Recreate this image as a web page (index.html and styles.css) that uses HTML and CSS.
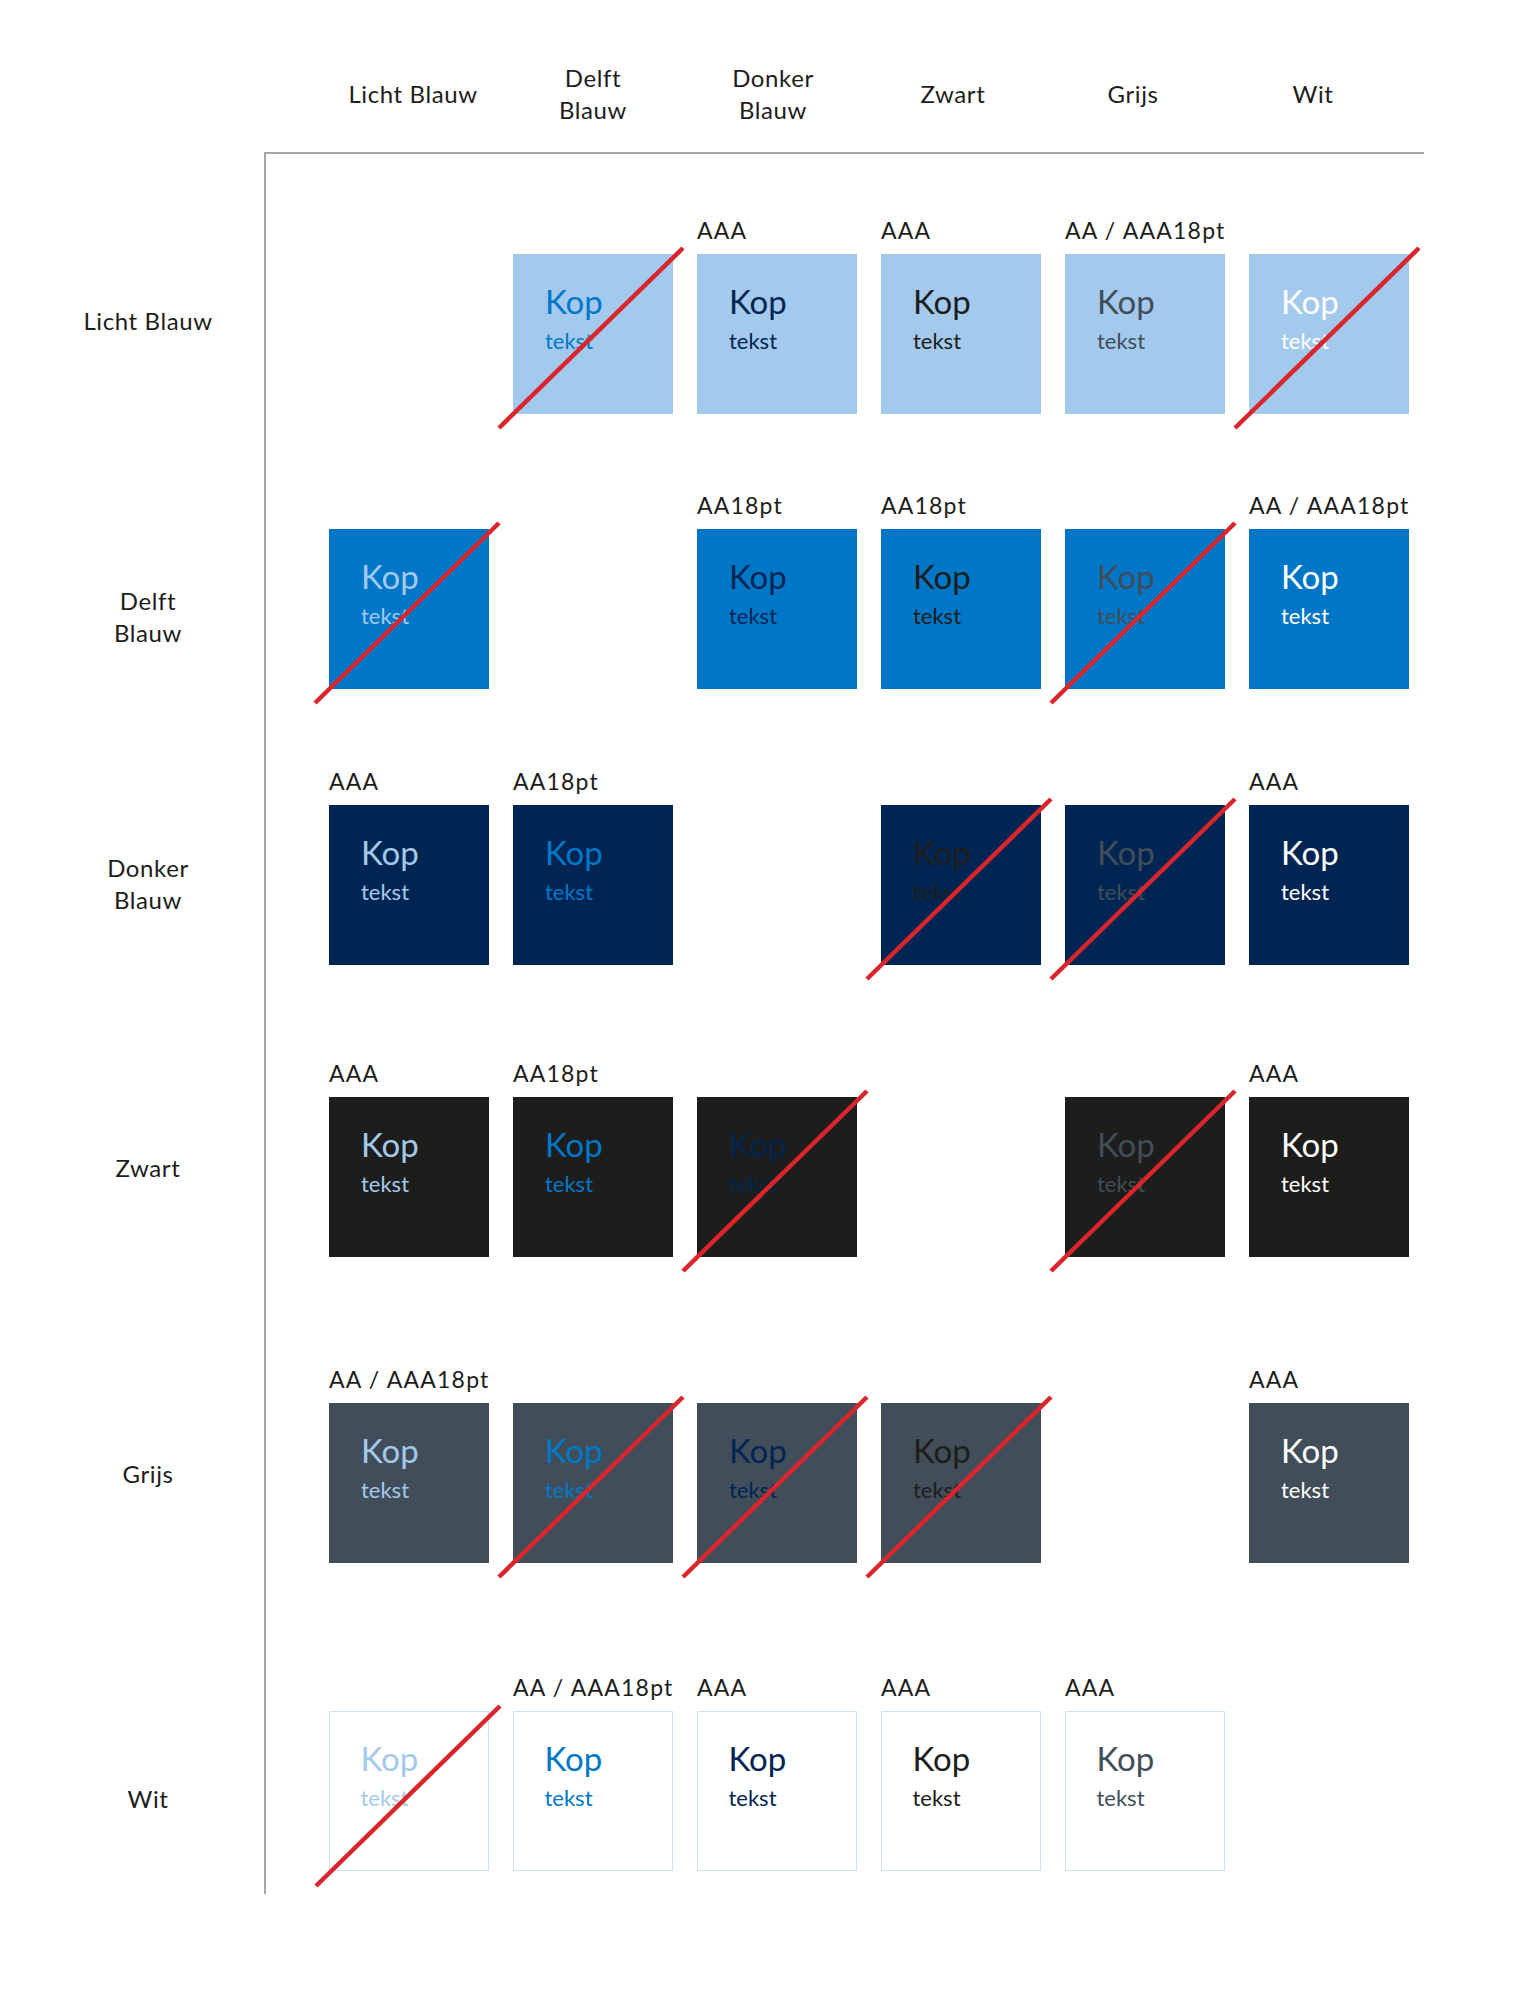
FILE: index.html
```html
<!DOCTYPE html>
<html lang="nl">
<head>
<meta charset="utf-8">
<title>Kleurcontrast</title>
<link rel="stylesheet" href="styles.css">
</head>
<body>
<div class="chart">
  <div class="head">
    <div class="hcell">Licht Blauw</div>
    <div class="hcell">Delft<br>Blauw</div>
    <div class="hcell">Donker<br>Blauw</div>
    <div class="hcell">Zwart</div>
    <div class="hcell">Grijs</div>
    <div class="hcell">Wit</div>
  </div>
  <div class="body">
    <div class="frame"></div>

    <div class="rlabel r1">Licht Blauw</div>
    <div class="cells r1">
      <div class="cell"></div>
      <div class="cell"><div class="lbl"></div><div class="box bg-lb t-db"><span class="kop">Kop</span><span class="tekst">tekst</span><svg class="x" viewBox="0 0 192 192"><line x1="2" y1="184" x2="186" y2="4"/></svg></div></div>
      <div class="cell"><div class="lbl">AAA</div><div class="box bg-lb t-dk"><span class="kop">Kop</span><span class="tekst">tekst</span></div></div>
      <div class="cell"><div class="lbl">AAA</div><div class="box bg-lb t-zw"><span class="kop">Kop</span><span class="tekst">tekst</span></div></div>
      <div class="cell"><div class="lbl">AA / AAA18pt</div><div class="box bg-lb t-gr"><span class="kop">Kop</span><span class="tekst">tekst</span></div></div>
      <div class="cell"><div class="lbl"></div><div class="box bg-lb t-wt"><span class="kop">Kop</span><span class="tekst">tekst</span><svg class="x" viewBox="0 0 192 192"><line x1="2" y1="184" x2="186" y2="4"/></svg></div></div>
    </div>

    <div class="rlabel r2">Delft<br>Blauw</div>
    <div class="cells r2">
      <div class="cell"><div class="lbl"></div><div class="box bg-db t-lb"><span class="kop">Kop</span><span class="tekst">tekst</span><svg class="x" viewBox="0 0 192 192"><line x1="2" y1="184" x2="186" y2="4"/></svg></div></div>
      <div class="cell"></div>
      <div class="cell"><div class="lbl">AA18pt</div><div class="box bg-db t-dk"><span class="kop">Kop</span><span class="tekst">tekst</span></div></div>
      <div class="cell"><div class="lbl">AA18pt</div><div class="box bg-db t-zw"><span class="kop">Kop</span><span class="tekst">tekst</span></div></div>
      <div class="cell"><div class="lbl"></div><div class="box bg-db t-gr"><span class="kop">Kop</span><span class="tekst">tekst</span><svg class="x" viewBox="0 0 192 192"><line x1="2" y1="184" x2="186" y2="4"/></svg></div></div>
      <div class="cell"><div class="lbl">AA / AAA18pt</div><div class="box bg-db t-wt"><span class="kop">Kop</span><span class="tekst">tekst</span></div></div>
    </div>

    <div class="rlabel r3">Donker<br>Blauw</div>
    <div class="cells r3">
      <div class="cell"><div class="lbl">AAA</div><div class="box bg-dk t-lb"><span class="kop">Kop</span><span class="tekst">tekst</span></div></div>
      <div class="cell"><div class="lbl">AA18pt</div><div class="box bg-dk t-db"><span class="kop">Kop</span><span class="tekst">tekst</span></div></div>
      <div class="cell"></div>
      <div class="cell"><div class="lbl"></div><div class="box bg-dk t-zw"><span class="kop">Kop</span><span class="tekst">tekst</span><svg class="x" viewBox="0 0 192 192"><line x1="2" y1="184" x2="186" y2="4"/></svg></div></div>
      <div class="cell"><div class="lbl"></div><div class="box bg-dk t-gr"><span class="kop">Kop</span><span class="tekst">tekst</span><svg class="x" viewBox="0 0 192 192"><line x1="2" y1="184" x2="186" y2="4"/></svg></div></div>
      <div class="cell"><div class="lbl">AAA</div><div class="box bg-dk t-wt"><span class="kop">Kop</span><span class="tekst">tekst</span></div></div>
    </div>

    <div class="rlabel r4">Zwart</div>
    <div class="cells r4">
      <div class="cell"><div class="lbl">AAA</div><div class="box bg-zw t-lb"><span class="kop">Kop</span><span class="tekst">tekst</span></div></div>
      <div class="cell"><div class="lbl">AA18pt</div><div class="box bg-zw t-db"><span class="kop">Kop</span><span class="tekst">tekst</span></div></div>
      <div class="cell"><div class="lbl"></div><div class="box bg-zw t-dk"><span class="kop">Kop</span><span class="tekst">tekst</span><svg class="x" viewBox="0 0 192 192"><line x1="2" y1="184" x2="186" y2="4"/></svg></div></div>
      <div class="cell"></div>
      <div class="cell"><div class="lbl"></div><div class="box bg-zw t-gr"><span class="kop">Kop</span><span class="tekst">tekst</span><svg class="x" viewBox="0 0 192 192"><line x1="2" y1="184" x2="186" y2="4"/></svg></div></div>
      <div class="cell"><div class="lbl">AAA</div><div class="box bg-zw t-wt"><span class="kop">Kop</span><span class="tekst">tekst</span></div></div>
    </div>

    <div class="rlabel r5">Grijs</div>
    <div class="cells r5">
      <div class="cell"><div class="lbl">AA / AAA18pt</div><div class="box bg-gr t-lb"><span class="kop">Kop</span><span class="tekst">tekst</span></div></div>
      <div class="cell"><div class="lbl"></div><div class="box bg-gr t-db"><span class="kop">Kop</span><span class="tekst">tekst</span><svg class="x" viewBox="0 0 192 192"><line x1="2" y1="184" x2="186" y2="4"/></svg></div></div>
      <div class="cell"><div class="lbl"></div><div class="box bg-gr t-dk"><span class="kop">Kop</span><span class="tekst">tekst</span><svg class="x" viewBox="0 0 192 192"><line x1="2" y1="184" x2="186" y2="4"/></svg></div></div>
      <div class="cell"><div class="lbl"></div><div class="box bg-gr t-zw"><span class="kop">Kop</span><span class="tekst">tekst</span><svg class="x" viewBox="0 0 192 192"><line x1="2" y1="184" x2="186" y2="4"/></svg></div></div>
      <div class="cell"></div>
      <div class="cell"><div class="lbl">AAA</div><div class="box bg-gr t-wt"><span class="kop">Kop</span><span class="tekst">tekst</span></div></div>
    </div>

    <div class="rlabel r6">Wit</div>
    <div class="cells r6">
      <div class="cell"><div class="lbl"></div><div class="box bg-wt t-lb"><span class="kop">Kop</span><span class="tekst">tekst</span><svg class="x" viewBox="0 0 192 192"><line x1="2" y1="184" x2="186" y2="4"/></svg></div></div>
      <div class="cell"><div class="lbl">AA / AAA18pt</div><div class="box bg-wt t-db"><span class="kop">Kop</span><span class="tekst">tekst</span></div></div>
      <div class="cell"><div class="lbl">AAA</div><div class="box bg-wt t-dk"><span class="kop">Kop</span><span class="tekst">tekst</span></div></div>
      <div class="cell"><div class="lbl">AAA</div><div class="box bg-wt t-zw"><span class="kop">Kop</span><span class="tekst">tekst</span></div></div>
      <div class="cell"><div class="lbl">AAA</div><div class="box bg-wt t-gr"><span class="kop">Kop</span><span class="tekst">tekst</span></div></div>
      <div class="cell"></div>
    </div>
  </div>
</div>
</body>
</html>
```

FILE: styles.css
```css
body {
  margin: 0;
  background: #ffffff;
  font-family: "Lato", "Open Sans", sans-serif;
  font-weight: 400;
  color: #1d1d1b;
}

.head {
  display: flex;
  gap: 20px;
  padding-left: 333px;
  padding-top: 36px;
  height: 152px;
  box-sizing: border-box;
  align-items: center;
}

.hcell {
  width: 160px;
  text-align: center;
  font-size: 24px;
  line-height: 32px;
  letter-spacing: 0.6px;
}

.body {
  display: grid;
  grid-template-columns: 264px 1160px;
  grid-template-rows: repeat(6, auto);
}

.frame {
  grid-column: 2;
  grid-row: 1 / -1;
  border-top: 2px solid #a6a6a6;
  border-left: 2px solid #a6a6a6;
}

.rlabel {
  grid-column: 1;
  height: 198px;
  box-sizing: border-box;
  padding-left: 32px;
  padding-top: 38px;
  display: flex;
  align-items: center;
  justify-content: center;
  text-align: center;
  font-size: 24px;
  line-height: 32px;
  letter-spacing: 0.6px;
}

.cells {
  grid-column: 2;
  display: flex;
  gap: 24px;
  padding-left: 65px;
}

.r1 { grid-row: 1; margin-top: 64px; }
.r2 { grid-row: 2; margin-top: 77px; }
.r3 { grid-row: 3; margin-top: 78px; }
.r4 { grid-row: 4; margin-top: 94px; }
.r5 { grid-row: 5; margin-top: 108px; }
.r6 { grid-row: 6; margin-top: 110px; margin-bottom: 23px; }

.rlabel.r1 { padding-top: 12px; }
.rlabel.r2 { padding-top: 54px; }
.rlabel.r3 { padding-top: 36px; }
.rlabel.r4 { padding-top: 20px; }
.rlabel.r5 { padding-top: 20px; }
.rlabel.r6 { padding-top: 54px; }

.cell {
  width: 160px;
  display: flex;
  flex-direction: column;
}

.lbl {
  height: 28px;
  margin-bottom: 10px;
  font-size: 23px;
  line-height: 28px;
  letter-spacing: 1.2px;
  white-space: nowrap;
}

.box {
  position: relative;
  width: 160px;
  height: 160px;
  box-sizing: border-box;
  padding: 31px 0 0 32px;
}

.kop {
  display: block;
  font-size: 33px;
  line-height: 32px;
}

.tekst {
  display: block;
  margin-top: 13px;
  font-size: 22px;
  line-height: 22px;
}

.x {
  position: absolute;
  left: -16px;
  top: -10px;
  width: 192px;
  height: 192px;
  overflow: visible;
}

.x line {
  stroke: #d9252b;
  stroke-width: 4.5;
}

.bg-lb { background: #a3c9ec; }
.bg-db { background: #0076c6; }
.bg-dk { background: #002552; }
.bg-zw { background: #1d1d1b; }
.bg-gr { background: #414e59; }
.bg-wt { background: #ffffff; border: 1.5px solid #cde0f2; padding: 29.5px 0 0 30.5px; }

.t-lb { color: #a3c9ec; }
.t-db { color: #0078c8; }
.t-dk { color: #002552; }
.t-zw { color: #1d1d1b; }
.t-gr { color: #414e59; }
.t-wt { color: #ffffff; }
```
